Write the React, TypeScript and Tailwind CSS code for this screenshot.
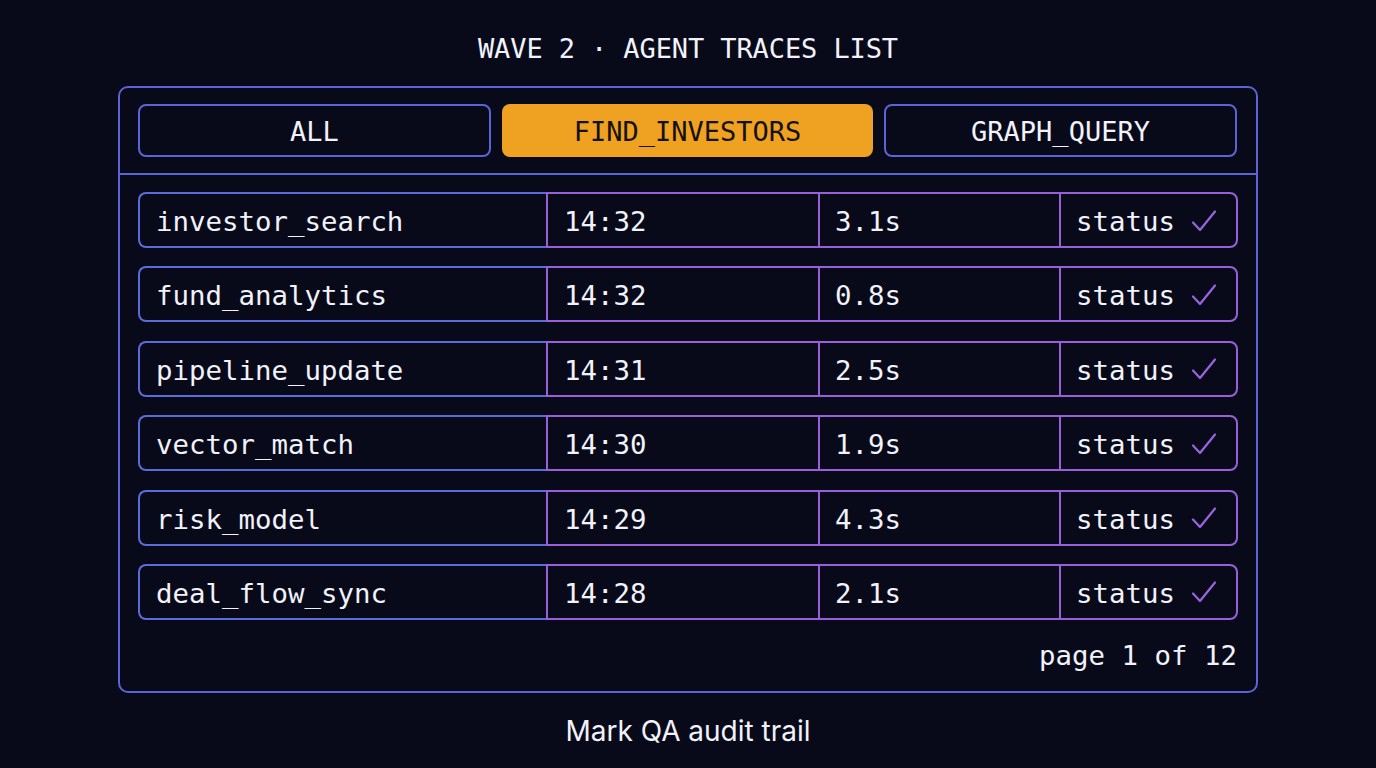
import { Fragment } from 'react';

const rows = [
  { name: 'investor_search', time: '14:32', dur: '3.1s' },
  { name: 'fund_analytics', time: '14:32', dur: '0.8s' },
  { name: 'pipeline_update', time: '14:31', dur: '2.5s' },
  { name: 'vector_match', time: '14:30', dur: '1.9s' },
  { name: 'risk_model', time: '14:29', dur: '4.3s' },
  { name: 'deal_flow_sync', time: '14:28', dur: '2.1s' },
];

const mono = "font-['DejaVu_Sans_Mono','Liberation_Mono',monospace]";

function Check() {
  return (
    <svg width="26" height="24" viewBox="0 0 26 24" fill="none" className="ml-4 -mt-[2px]">
      <path d="M2 13.5 L9 21 L24 2.5" stroke="#9b63e0" strokeWidth="2.2" strokeLinecap="round" strokeLinejoin="round" />
    </svg>
  );
}

export default function App() {
  return (
    <div className={`w-full h-[768px] bg-[#080a19] text-[#f1f2fb] flex flex-col items-center ${mono}`}>
      <h1 className="mt-[32px] h-[34px] leading-[34px] text-[27px] tracking-[-0.1px]">
        WAVE 2 · AGENT TRACES LIST
      </h1>

      <div className="mt-[20px] w-[1140px] h-[607px] border-2 border-[#5b63d6] rounded-[10px] flex flex-col">
        <div className="px-[18px] pt-[16px] pb-[16px] flex gap-[11px]">
          <div className="w-[353px] h-[53px] pt-[3px] rounded-[8px] border-2 border-[#5b63d6] flex items-center justify-center text-[27px]">
            ALL
          </div>
          <div className="w-[371px] h-[53px] pt-[3px] rounded-[8px] bg-[#efa121] text-[#14110a] flex items-center justify-center text-[27px]">
            FIND_INVESTORS
          </div>
          <div className="w-[353px] h-[53px] pt-[3px] rounded-[8px] border-2 border-[#5b63d6] flex items-center justify-center text-[27px]">
            GRAPH_QUERY
          </div>
        </div>

        <div className="h-[2px] bg-[#5b63d6]" />

        <div className="px-[18px] pt-[17px] flex flex-col gap-[18.4px]">
          {rows.map((r) => (
            <Fragment key={r.name}>
              <div className="flex h-[56px] text-[27.4px]">
                <div className="w-[408px] pt-[3px] border-2 border-r-0 border-[#5b6bd8] rounded-l-[8px] flex items-center pl-[16px]">
                  {r.name}
                </div>
                <div className="w-[272px] pt-[3px] border-2 border-r-0 border-[#985fd9] flex items-center pl-[16px]">
                  {r.time}
                </div>
                <div className="w-[241px] pt-[3px] border-2 border-r-0 border-[#985fd9] flex items-center pl-[15px]">
                  {r.dur}
                </div>
                <div className="flex-1 pt-[3px] border-2 border-[#985fd9] rounded-r-[8px] flex items-center pl-[15px]">
                  status
                  <Check />
                </div>
              </div>
            </Fragment>
          ))}
        </div>

        <div className="px-[19px] mt-[19px] text-right text-[27.4px] leading-[34px]">page 1 of 12</div>
      </div>

      <p className="mt-[21px] text-[28px] leading-[34px] font-['Inter','Noto_Sans',sans-serif] text-[#f1f2fb]">
        Mark QA audit trail
      </p>
    </div>
  );
}
